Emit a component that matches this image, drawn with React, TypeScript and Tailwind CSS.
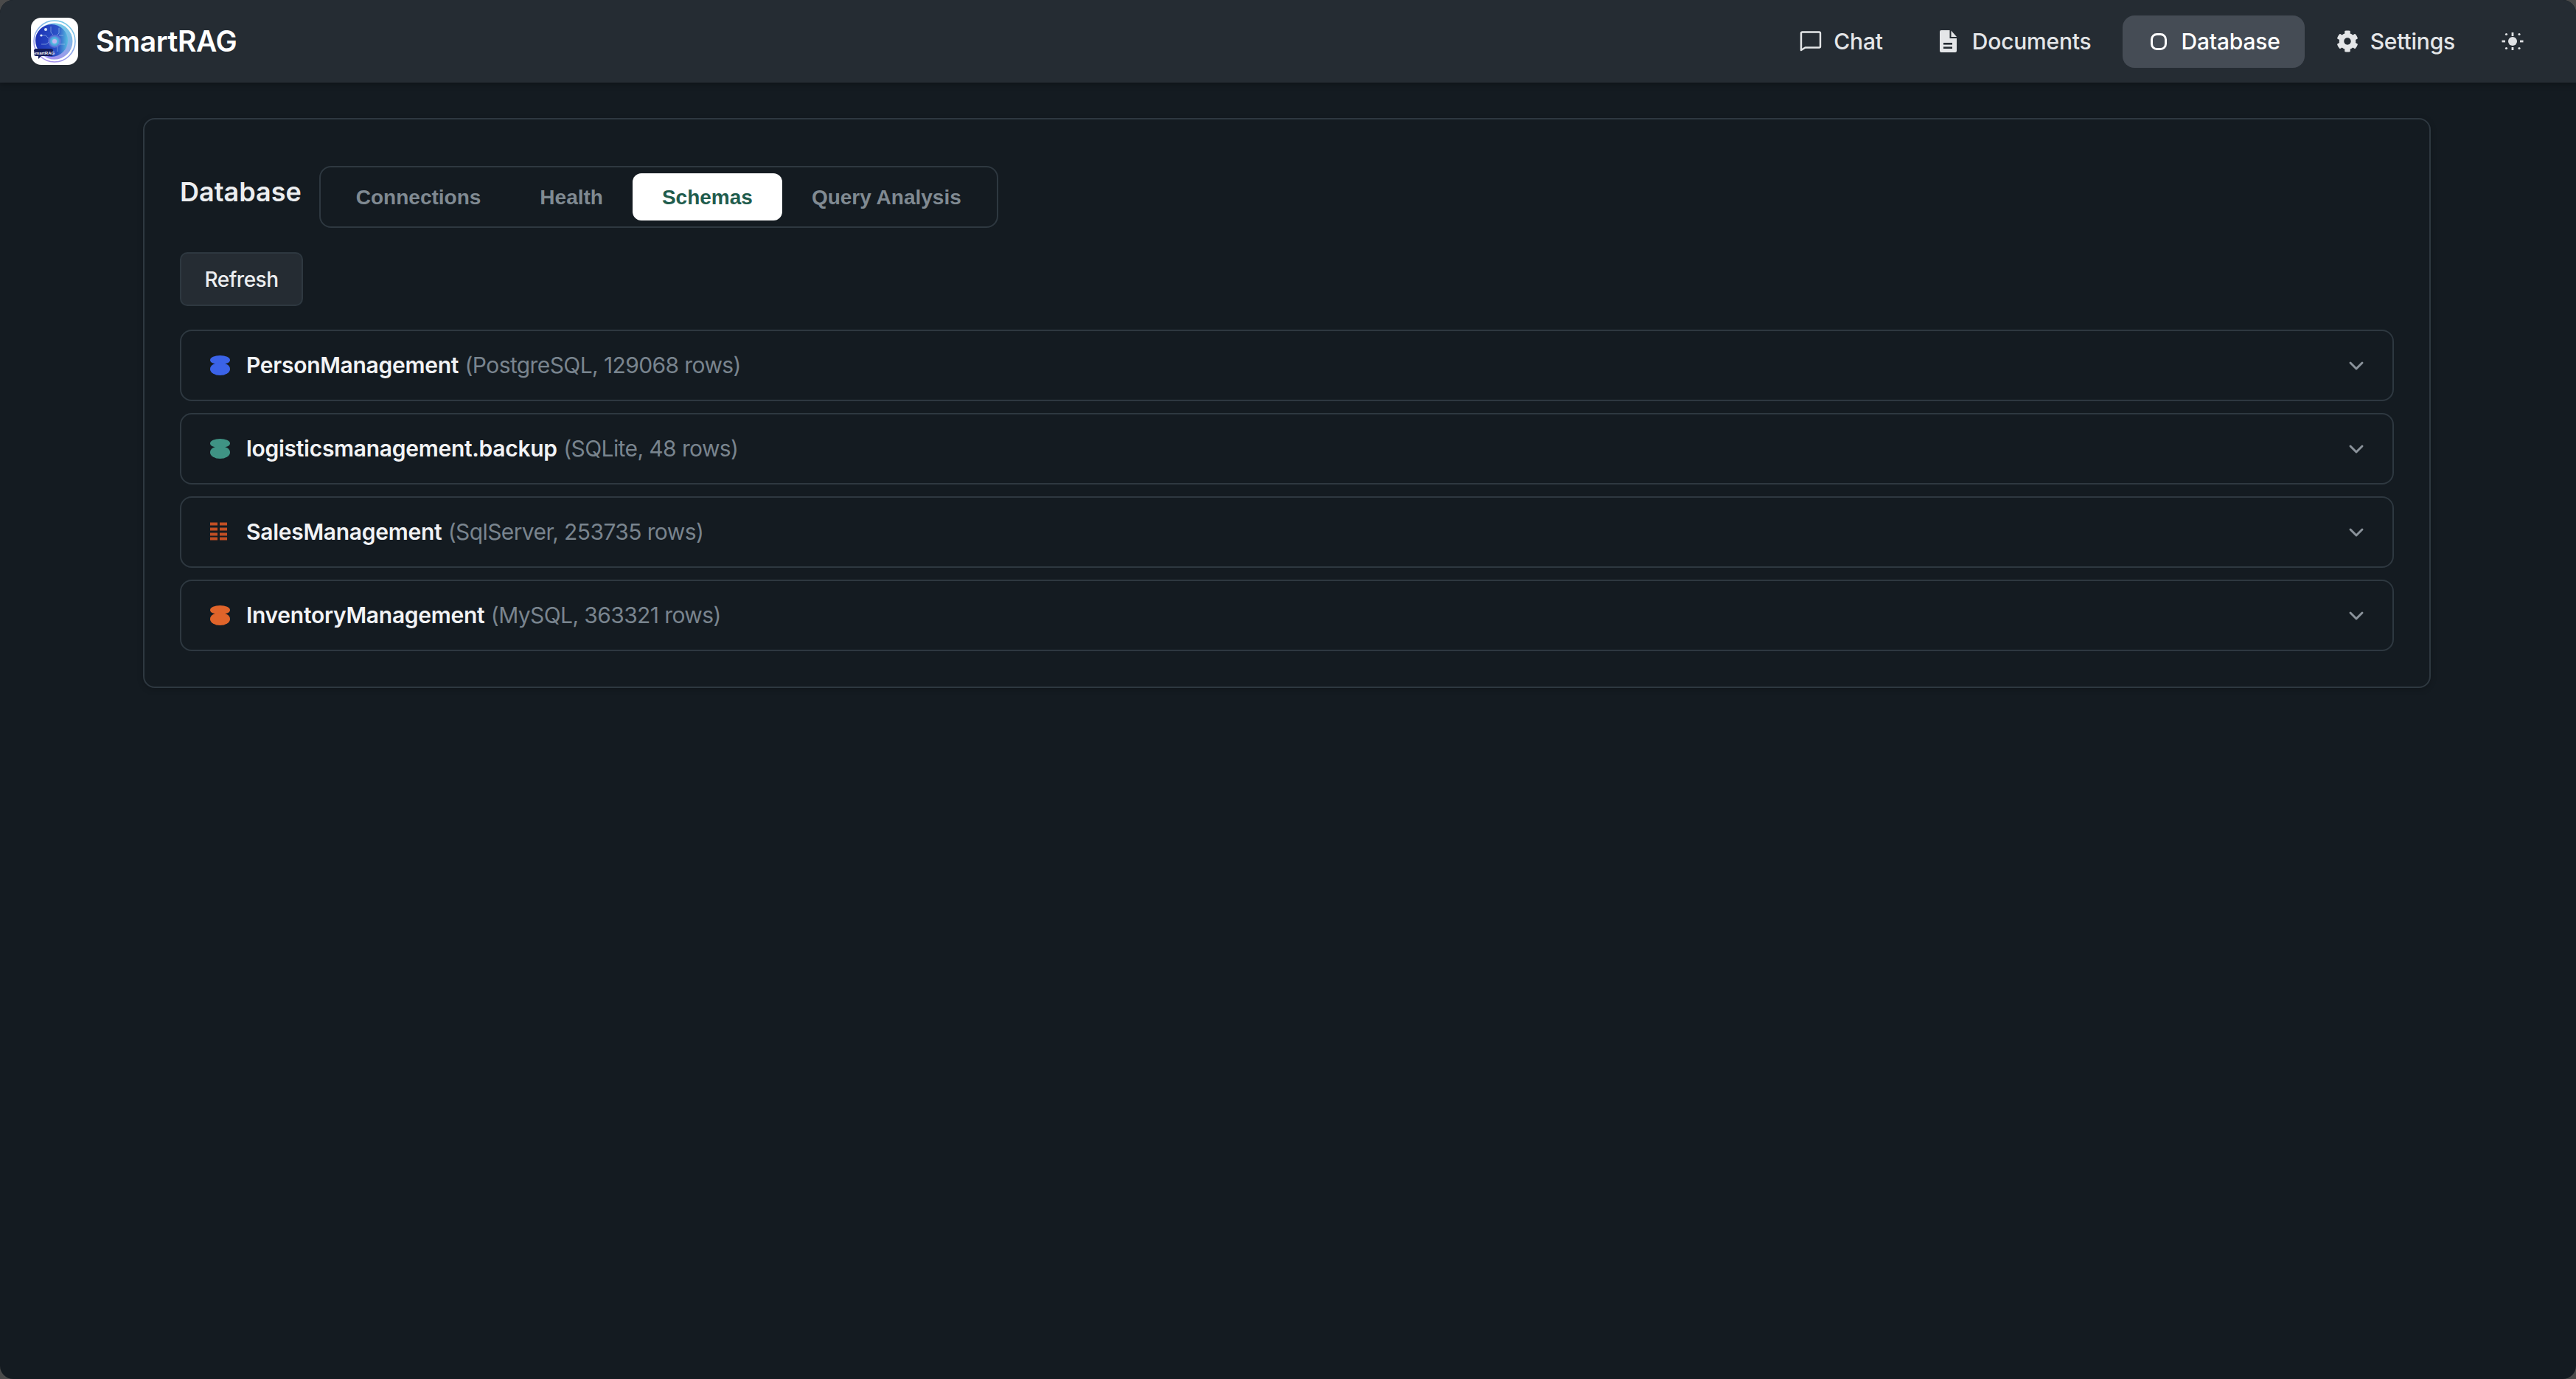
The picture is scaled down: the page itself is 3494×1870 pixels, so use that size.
import { ChevronDown } from 'lucide-react';
import { FaCog } from 'react-icons/fa';

const tabs = ['Connections', 'Health', 'Schemas', 'Query Analysis'];

const PeanutIcon = ({ color }: { color: string }) => (
  <svg width="27" height="27" viewBox="0 0 27 27" className={color}>
    <ellipse cx="13.5" cy="6.2" rx="13.5" ry="6.2" fill="currentColor" />
    <ellipse cx="13.5" cy="18.4" rx="13.5" ry="8.6" fill="currentColor" />
  </svg>
);

const GridIcon = () => (
  <svg width="27" height="27" viewBox="0 0 27 27" className="text-[#c24f24]">
    {[0, 7, 14, 20].map((y) => (
      <g key={y} fill="currentColor">
        <rect x="0" y={y + 0.5} width="10" height="4" />
        <rect x="13" y={y + 0.5} width="10" height="4" />
      </g>
    ))}
  </svg>
);

const schemas = [
  { name: 'PersonManagement', meta: '(PostgreSQL, 129068 rows)', icon: <PeanutIcon color="text-[#3b63e8]" /> },
  { name: 'logisticsmanagement.backup', meta: '(SQLite, 48 rows)', icon: <PeanutIcon color="text-[#3f9384]" /> },
  { name: 'SalesManagement', meta: '(SqlServer, 253735 rows)', icon: <GridIcon /> },
  { name: 'InventoryManagement', meta: '(MySQL, 363321 rows)', icon: <PeanutIcon color="text-[#e0642a]" /> },
];

const Logo = () => (
  <div className="w-16 h-16 rounded-[14px] bg-white overflow-hidden">
    <svg width="64" height="64" viewBox="0 0 64 64">
      <defs>
        <linearGradient id="ring" x1="0.8" y1="0" x2="0.3" y2="1">
          <stop offset="0" stopColor="#6fcbe6" />
          <stop offset="1" stopColor="#a78cec" />
        </linearGradient>
        <linearGradient id="disk" x1="0" y1="0.5" x2="1" y2="0.5">
          <stop offset="0" stopColor="#1c2fb4" />
          <stop offset="0.7" stopColor="#2c55c8" />
          <stop offset="1" stopColor="#58bfe0" />
        </linearGradient>
        <radialGradient id="core">
          <stop offset="0" stopColor="#7fe0ea" />
          <stop offset="0.6" stopColor="#4aa8dc" />
          <stop offset="1" stopColor="#8a6fe0" stopOpacity="0.4" />
        </radialGradient>
      </defs>
      <circle cx="32" cy="32" r="28" fill="none" stroke="url(#ring)" strokeWidth="1.6" />
      <circle cx="31" cy="32" r="25" fill="#d6ecf8" />
      <circle cx="32" cy="32" r="24.5" fill="url(#ring)" />
      <circle cx="28" cy="31" r="22" fill="url(#disk)" />
      <g stroke="#b6d6f4" strokeWidth="0.7" fill="none" opacity="0.75">
        <path d="M12 24h8l4 4M14 36h7l3-3M27 12v8l3 3M38 14v7l-3 3M44 24h-6M46 36h-8l-3-3M36 46v-6l-2-3" />
      </g>
      <circle cx="14" cy="24" r="1.6" fill="#dce8fa" />
      <circle cx="20" cy="16" r="2" fill="#dce8fa" />
      <circle cx="32" cy="32" r="9" fill="url(#core)" />
      <circle cx="32" cy="32" r="3" fill="#c2b4f0" />
      <path d="M4 45a3 3 0 0 1 3-3h20a3 3 0 0 1 3 3v4a3 3 0 0 1-3 3H14l-4 4v-4H7a3 3 0 0 1-3-3z" fill="#141c5c" />
      <text x="17" y="49.5" textAnchor="middle" fontSize="6" fontWeight="700" fill="#ffffff" fontFamily="'Liberation Sans', sans-serif">
        SmartRAG
      </text>
    </svg>
  </div>
);

const ChatIcon = () => (
  <svg width="32" height="32" viewBox="0 0 32 32" fill="none" stroke="currentColor" strokeWidth="2.4" strokeLinejoin="round">
    <path d="M3 28V5a1.5 1.5 0 0 1 1.5-1.5h23A1.5 1.5 0 0 1 29 5v18a1.5 1.5 0 0 1-1.5 1.5H8.5z" />
  </svg>
);

const DocIcon = () => (
  <svg width="32" height="32" viewBox="0 0 32 32">
    <path
      d="M5 1h11.5v11H26v17a2 2 0 0 1-2 2H5a2 2 0 0 1-2-2V3a2 2 0 0 1 2-2z"
      fill="currentColor"
    />
    <path d="M18.5 1.5 26 10h-7.5z" fill="currentColor" />
    <rect x="8" y="18" width="12" height="2.6" fill="#252c33" />
    <rect x="8" y="23.4" width="12" height="2.6" fill="#252c33" />
  </svg>
);

const DbIcon = () => (
  <svg width="32" height="32" viewBox="0 0 32 32" fill="none" stroke="currentColor" strokeWidth="3">
    <rect x="6.5" y="6.5" width="19" height="20" rx="7" />
  </svg>
);

const SunIcon = () => (
  <svg width="30" height="30" viewBox="0 0 30 30" className="text-[#dfe1e4]">
    <circle cx="15" cy="15" r="6" fill="currentColor" />
    <g fill="currentColor">
      <rect x="13.6" y="3" width="2.8" height="5" />
      <rect x="13.6" y="23" width="2.8" height="4" />
      <rect x="0.5" y="13.6" width="4.5" height="2.8" />
      <rect x="25" y="13.6" width="4.5" height="2.8" />
      <circle cx="6.5" cy="5.5" r="1.6" />
      <circle cx="24" cy="5.5" r="1.6" />
      <circle cx="6.5" cy="24.5" r="1.6" />
      <circle cx="24" cy="24.5" r="1.6" />
    </g>
  </svg>
);

export default function App() {
  return (
    <div className="h-[1870px] bg-[#4a4a4a]">
      <div className="h-[1870px] rounded-[18px] overflow-hidden bg-[#141b21] font-['Inter','Noto_Sans',sans-serif]">
        {/* Top bar */}
        <header className="relative h-[112px] bg-[#252c33] flex items-center justify-between pl-[42px] pr-[71px] shadow-[0_2px_8px_rgba(0,0,0,0.3)]">
          <div className="flex items-center gap-6">
            <Logo />
            <span className="text-[39px] font-semibold text-white tracking-[-0.4px]">SmartRAG</span>
          </div>
          <nav className="flex items-center gap-[10px] text-[30px] font-medium tracking-[-0.2px]">
            <a className="flex items-center gap-[15px] px-8 h-[71px] text-[#e4e6e8]">
              <ChatIcon />
              Chat
            </a>
            <a className="flex items-center gap-[15px] px-8 h-[71px] text-[#e4e6e8]">
              <DocIcon />
              Documents
            </a>
            <a className="flex items-center gap-[15px] px-[33px] h-[71px] rounded-2xl text-white bg-[#454c55]">
              <DbIcon />
              Database
            </a>
            <a className="flex items-center gap-[15px] px-8 h-[71px] text-[#e4e6e8]">
              <span className="w-8 flex justify-center">
                <FaCog size={30} />
              </span>
              Settings
            </a>
            <div className="ml-[21px] h-[30px]">
              <SunIcon />
            </div>
          </nav>
        </header>

        <main className="pt-[48px]">
          <div className="ml-[194px] w-[3103px] rounded-2xl border-2 border-[#2e3840] p-[48px] shadow-[0_2px_8px_rgba(0,0,0,0.2)]">
            <div className="flex items-start gap-6 mt-[15px]">
              <h2 className="text-[36px] font-semibold text-[#eceef0] mt-[8px]">Database</h2>
              <div className="flex items-center p-2 rounded-2xl border-2 border-[#2e3840] font-['Liberation_Sans',Arial,sans-serif] text-[28px] font-bold">
                {tabs.map((tab) => (
                  <div
                    key={tab}
                    className={
                      tab === 'Schemas'
                        ? 'h-16 px-10 pt-[1px] flex items-center rounded-xl bg-white text-[#1f5c4d]'
                        : 'h-16 px-10 pt-[1px] flex items-center rounded-xl text-[#808a92]'
                    }
                  >
                    {tab}
                  </div>
                ))}
              </div>
            </div>

            <button className="mt-[33px] h-[73px] w-[167px] rounded-[10px] border-2 border-[#2e3840] bg-[#252c33] text-[28px] font-medium tracking-[-0.5px] text-[#eceef0]">
              Refresh
            </button>

            {/* Schema list */}
            <div className="mt-8 flex flex-col gap-4">
              {schemas.map((s) => (
                <div
                  key={s.name}
                  className="h-[97px] rounded-2xl border-2 border-[#2e3840] flex items-center justify-between pl-[39px] pr-[33px]"
                >
                  <div className="flex items-center gap-[22px] text-[30px]">
                    {s.icon}
                    <span>
                      <span className="font-semibold text-[#f2f3f5] tracking-[-0.28px]">{s.name}</span>{' '}
                      <span className="text-[#79848e] tracking-[-0.6px]">{s.meta}</span>
                    </span>
                  </div>
                  <ChevronDown size={32} strokeWidth={2.2} className="text-[#8a929a]" />
                </div>
              ))}
            </div>
          </div>
        </main>
      </div>
    </div>
  );
}
